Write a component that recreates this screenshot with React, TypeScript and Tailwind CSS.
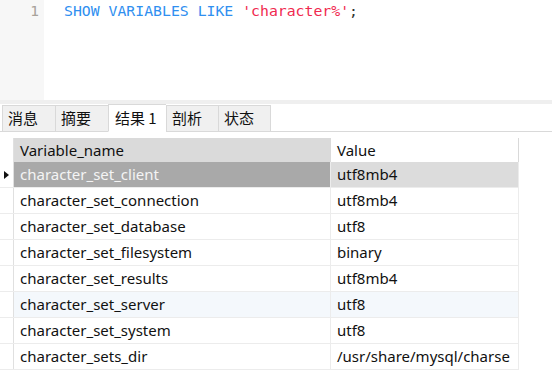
import React from "react";

// Query editor with one line of SQL, then the result tabs and grid.
const rows: [string, string][] = [
  ["character_set_client", "utf8mb4"],
  ["character_set_connection", "utf8mb4"],
  ["character_set_database", "utf8"],
  ["character_set_filesystem", "binary"],
  ["character_set_results", "utf8mb4"],
  ["character_set_server", "utf8"],
  ["character_set_system", "utf8"],
  ["character_sets_dir", "/usr/share/mysql/charse"],
];

const tabs = [
  { label: "消息", w: "w-[53px]" },
  { label: "摘要", w: "w-[53px]" },
  { label: "结果 1", w: "w-[58px]", active: true },
  { label: "剖析", w: "w-[52px]" },
  { label: "状态", w: "w-[53px]", last: true },
];

function Editor() {
  return (
    <div className="flex h-[100px] bg-white">
      <div className="w-[44px] bg-[#f7f7f7] pr-[5px] pt-[1px] text-right font-['DejaVu_Sans_Mono',monospace] text-[14.5px] leading-[20px] text-[#a8a29a]">
        1
      </div>
      <div className="pl-[20px] pt-[1px] font-['DejaVu_Sans_Mono',monospace] text-[14.8px] leading-[20px] whitespace-pre">
        <span className="text-[#2f8ff0]">SHOW VARIABLES LIKE </span>
        <span className="text-[#f0294f]">'character%'</span>
        <span className="text-[#333333]">;</span>
      </div>
    </div>
  );
}

function TabBar() {
  return (
    <div className="flex h-[28px] items-end border-b border-[#d9d9d9] bg-white pl-[2px] font-['Noto_Sans_CJK_SC',sans-serif] text-[15px] text-[#111111]">
      {tabs.map((t) => (
        <div
          key={t.label}
          className={`${t.w} -mb-px flex items-center border-l border-t border-[#d9d9d9] ${
            t.last ? "border-r" : ""
          } ${
            t.active
              ? "h-[28px] border-b border-b-white bg-white pl-[6px]"
              : "h-[27px] border-b bg-[#f0f0f0] pl-[5px]"
          }`}
        >
          {t.label}
        </div>
      ))}
    </div>
  );
}

function Grid() {
  return (
    <div className="w-[519px] font-['Noto_Sans',sans-serif] text-[15px] text-[#111111]">
      <div className="flex h-[24px]">
        <div className="w-[14px] border-r border-[#e0e0e0] bg-white" />
        <div className="flex w-[317px] items-center bg-[#dadada] pl-[6px]">
          Variable_name
        </div>
        <div className="flex w-[188px] items-center border-r border-[#d9d9d9] bg-white pl-[6px]">
          Value
        </div>
      </div>
      {rows.map(([name, value], i) => {
        const selected = i === 0;
        const hover = i === 5;
        return (
          <div key={name} className="flex h-[26px] border-b border-[#ececec]">
            <div className="flex w-[14px] items-center justify-center border-r border-[#e0e0e0] bg-white">
              {selected && (
                <svg width="7" height="10" viewBox="0 0 7 10">
                  <path d="M1 1 L6 5 L1 9 Z" fill="#111" />
                </svg>
              )}
            </div>
            <div
              className={`flex w-[317px] items-center border-r border-[#ececec] pl-[6px] ${
                selected
                  ? "bg-[#a9a9a9] text-[#f4f4f4]"
                  : hover
                  ? "bg-[#f4f8fc]"
                  : "bg-white"
              }`}
            >
              {name}
            </div>
            <div
              className={`flex w-[188px] items-center border-r border-[#ececec] pl-[6px] ${
                selected ? "bg-[#dcdcdc]" : hover ? "bg-[#f4f8fc]" : "bg-white"
              }`}
            >
              {value}
            </div>
          </div>
        );
      })}
    </div>
  );
}

export default function App() {
  return (
    <div className="h-[388px] w-[552px] overflow-hidden bg-white">
      <Editor />
      <div className="h-[4px] bg-[#efefef]" />
      <TabBar />
      <div className="h-[6px]" />
      <Grid />
    </div>
  );
}
